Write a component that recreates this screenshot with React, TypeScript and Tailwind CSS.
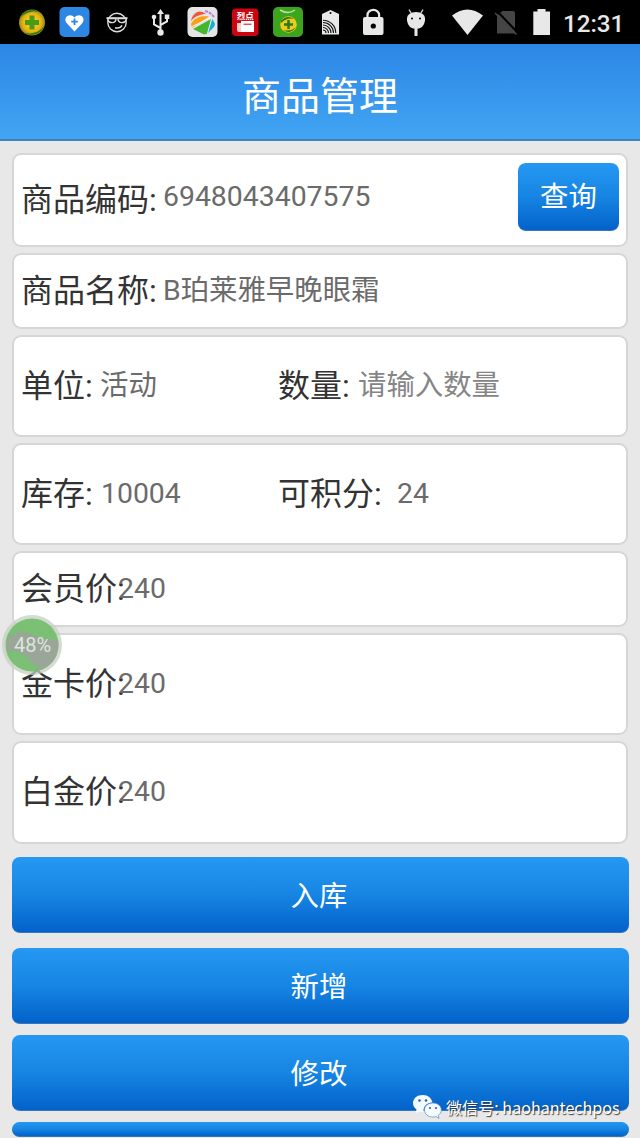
import type { ReactNode } from "react";

function StatusBar() {
    return (
        <div className="flex h-[44px] w-full shrink-0 bg-black">
            <svg width="560" height="44" viewBox="0 0 560 44" fill="#e8e8e8">
                <defs>
                    <radialGradient id="gold">
                        <stop offset="0" stopColor="#ffdf20" />
                        <stop offset="0.7" stopColor="#e9b414" />
                        <stop offset="1" stopColor="#9a8a16" />
                    </radialGradient>
                    <clipPath id="ball">
                        <circle cx="203" cy="22.5" r="12" />
                    </clipPath>
                    <clipPath id="tag">
                        <rect x="323" y="19" width="14" height="14" />
                    </clipPath>
                </defs>
                <circle cx="32" cy="22.5" r="13" fill="url(#gold)" />
                <path d="M20 18A13 13 0 0 1 40 12.500C33 10 25 13 20 18ZM44 26A13 13 0 0 1 24 32.500C32 35 40 32 44 26Z" fill="#347c16" />
                <path d="M29.500 15.500h5v4.500h4.500v5h-4.500v4.500h-5V25H25v-5h4.500Z" fill="#4b9b18" />
                <rect x="59.500" y="7" width="30" height="30" rx="5" fill="#2d86e2" />
                <path d="M74.500 31.500 67 23.500C62 17 70 12 74.500 17.500C79 12 87 17 82 23.500Z" fill="#fff" />
                <path d="M74.500 18.500v6.500M71.300 21.700h6.500" stroke="#2d86e2" strokeWidth="1.800" />
                <g fill="none" stroke="#ddd" strokeWidth="1.400">
                    <circle cx="117" cy="22.500" r="9.200" />
                    <path d="M106.500 18h21M115 27.800c3.500.7 6-.2 7-2.500" />
                    <path d="M107.500 18.500h8.500c0 5.500-7.500 5.500-8.500 0ZM118 18.500h8.500c-1 5.500-8.500 5.500-8.500 0Z" fill="#000" />
                </g>
                <path d="M160.500 32V13M160.500 28l-6.500-3.500V17M160.500 25l6.500-3.500V16" stroke="#e8e8e8" fill="none" strokeWidth="2" />
                <circle cx="160.500" cy="32.500" r="3.200" />
                <path d="m160.500 9 3.500 5h-7Z" />
                <circle cx="154" cy="17" r="2.300" />
                <rect x="164.800" y="14.500" width="4.500" height="4.500" />
                <rect x="187.500" y="7" width="30" height="30" rx="5" fill="#e5e5e7" />
                <g clipPath="url(#ball)">
                    <path d="M191 16C194 11 201 10 206 14C201 14 195 16 191 21Z" fill="#f35438" />
                    <path d="M190 26C193 18 200 15 209 16.500L192 28Z" fill="#ff9f13" />
                    <path d="M193 29 211 19 207 36Z" fill="#46b72c" />
                    <path d="M207 34 211.500 18 216 25Z" fill="#19acd9" />
                    <path d="M191 27 211 17.500M207 35 212 18" stroke="#f4f4f4" strokeWidth="1" />
                </g>
                <path d="M205 11q6 1.500 9 6" stroke="#b780d4" strokeWidth="2" strokeDasharray="3 1" fill="none" />
                <rect x="232" y="8.500" width="26.500" height="27.500" rx="4" fill="#ca0711" />
                <rect x="241" y="21" width="13" height="11" fill="#fff" />
                <path d="M237 23h4v9h-2q-2 0-2-2Z" fill="#f7cece" />
                <path d="M243.500 24.200h8" stroke="#ca0711" strokeWidth="1" />
                <text x="245.300" y="19.200" textAnchor="middle" fontSize="8.500" fontWeight="700" fill="#fff" style={{ fontFamily: '"Noto Sans CJK SC", sans-serif' }}>
                    烈点
                </text>
                <rect x="273" y="7" width="30" height="30" rx="5" fill="#3ba51d" />
                <path d="M280 10q8 5 15 0" stroke="#b9e59a" strokeWidth="1.500" fill="none" />
                <circle cx="288.500" cy="24.500" r="8.300" fill="#f1c91b" />
                <path d="M281 21q6-7 13-2-7-2-13 4ZM296 27q-5 8-13 3 8 2 13-3Z" fill="#267513" />
                <path d="M288.500 20v9M284 24.500h9" stroke="#247c16" strokeWidth="2.500" />
                <path d="M322 14 330.500 10 339 14v20.500h-17Z" />
                <circle cx="330.500" cy="13" r="1" fill="#000" />
                <g clipPath="url(#tag)" fill="none" stroke="#111" strokeWidth="1.100">
                    <circle cx="323" cy="33" r="3" />
                    <circle cx="323" cy="33" r="5.500" />
                    <circle cx="323" cy="33" r="8" />
                    <circle cx="323" cy="33" r="10.500" />
                    <circle cx="323" cy="33" r="12.800" />
                </g>
                <rect x="363" y="17" width="20.500" height="18" rx="2" />
                <path d="M367.500 18v-3a5.800 5.200 0 0 1 11.600 0V18" fill="none" stroke="#e8e8e8" strokeWidth="2.200" />
                <circle cx="373.300" cy="26" r="2.600" fill="#000" />
                <path d="M407 18a9 6 0 0 1 18 0v2.500q-1 8-9 8.500-8-.5-9-8.500Z" />
                <path d="m409 9.500 3 5M423 9.500l-3 5" stroke="#e8e8e8" strokeWidth="1.200" />
                <rect x="414.500" y="28" width="3" height="8" />
                <circle cx="412" cy="18.500" r="1" fill="#000" />
                <circle cx="420" cy="18.500" r="1" fill="#000" />
                <path d="M452 15.500q15.500-12 31 0L467.500 35Z" />
                <path d="M498 14.500 502.500 11H513q2 0 2 2v20.500h-18V15Z" fill="#454545" />
                <path d="m497 11 21 22" stroke="#000" strokeWidth="2" />
                <path d="m495 13 21.500 21.500" stroke="#454545" strokeWidth="1.700" />
                <path d="M533.300 11.500h4.200V9h8v2.500h4.500V35h-16.700Z" />
            </svg>
            <span className="ml-[3px] mt-[7px] text-[24.200px] font-medium leading-[34px] text-[#e8e8e8]">12:31</span>
        </div>
    );
}

function Label({ children, className = "" }: { children: ReactNode; className?: string }) {
    return <span className={`shrink-0 whitespace-nowrap text-[32px] leading-[40px] text-[#333] ${className}`}>{children}</span>;
}

function Value({ children, className = "" }: { children: ReactNode; className?: string }) {
    return <span className={`relative whitespace-nowrap text-[28.400px] leading-[40px] text-[#6b6b6b] ${className}`}>{children}</span>;
}

function Row({ children, className = "" }: { children: ReactNode; className: string }) {
    return <div className={`flex w-full shrink-0 items-center rounded-[9px] border-2 border-[#d6d6d6] bg-white pl-[7px] ${className}`}>{children}</div>;
}

function Button({ children, className = "" }: { children?: ReactNode; className?: string }) {
    return (
        <button className={`flex shrink-0 items-center justify-center rounded-[8px] border-b border-[#3976b4] bg-linear-to-b from-[#2598f3] via-[#1785e3] to-[#0462ca] text-[28.400px] leading-none text-white ${className}`}>
            {children}
        </button>
    );
}

function ProgressBall() {
    return (
        <div className="absolute left-[2px] top-[615px] size-[60px]">
            <svg width="60" height="60" viewBox="0 0 60 60">
                <circle cx="30" cy="30" r="30" fill="#c3d0c0" fillOpacity=".75" />
                <circle cx="30" cy="30" r="26.500" fill="#72bd6a" fillOpacity=".9" />
                <path d="M8 21Q18 14 28 19T56 25A26.500 26.500 0 0 1 39 55Q31 49 26 43T5 35Q3 27 8 21Z" fill="#9da39c" fillOpacity=".9" />
            </svg>
            <span className="absolute inset-0 flex items-center justify-center pl-px text-[20px] leading-none text-[#dfe5de]">48%</span>
        </div>
    );
}

export default function App() {
    return (
        <div className="relative flex h-[1138px] w-[640px] flex-col overflow-hidden bg-[#e8e8e8] font-[Roboto,'Noto_Sans_CJK_SC',sans-serif]">
            <StatusBar />
            <header className="flex h-[97px] shrink-0 items-center justify-center border-b-2 border-[#4280b9] bg-linear-to-b from-[#2c86e6] to-[#42a5f2] pt-[12px] text-[39px] leading-none text-white">
                <h1>商品管理</h1>
            </header>
            <main className="flex flex-col pl-[12px] pr-[11px] pt-[12px]">
                <div className="flex flex-col gap-[6px] pr-px">
                    <Row className="h-[94px] justify-between pr-[7px]">
                        <div className="flex">
                            <Label className="w-[142px]">商品编码:</Label>
                            <Value className="-mt-[3px]">6948043407575</Value>
                        </div>
                        <Button className="-mt-[7px] h-[68px] w-[101px] pt-[5px]">查询</Button>
                    </Row>
                    <Row className="h-[76px]">
                        <Label className="w-[142px]">商品名称:</Label>
                        <Value>B珀莱雅早晚眼霜</Value>
                    </Row>
                    <Row className="h-[102px]">
                        <Label className="w-[79px]">单位:</Label>
                        <Value className="w-[178px]">活动</Value>
                        <Label className="w-[80px]">数量:</Label>
                        <Value className="text-[#858585]">请输入数量</Value>
                    </Row>
                    <Row className="h-[102px]">
                        <Label className="w-[80px]">库存:</Label>
                        <Value className="w-[177px]">10004</Value>
                        <Label className="w-[119px]">可积分:</Label>
                        <Value>24</Value>
                    </Row>
                    <Row className="h-[76px]">
                        <Label className="w-[97px]">会员价:</Label>
                        <Value>240</Value>
                    </Row>
                    <Row className="h-[102px]">
                        <Label className="w-[97px]">金卡价:</Label>
                        <Value>240</Value>
                    </Row>
                    <Row className="h-[103px] pb-px">
                        <Label className="w-[97px]">白金价:</Label>
                        <Value>240</Value>
                    </Row>
                </div>
                <Button className="mt-[13px] h-[76px] pr-[3px] pt-[5px]">入库</Button>
                <Button className="mt-[15px] h-[76px] pr-[3px] pt-[5px]">新增</Button>
                <Button className="mt-[11px] h-[76px] pr-[3px] pt-[5px]">修改</Button>
                <Button className="mt-[11px] h-[15px] rounded-[4px]" />
            </main>
            <ProgressBall />
            <div className="absolute left-[413px] top-[1094px] flex items-center">
                <svg width="29" height="26" viewBox="0 0 29 26" fill="#f5faff">
                    <path d="M10 1C4 1 0 4.500 0 9.200c0 2.600 1.400 4.700 3.500 6L2.500 19.500l4-2q2 .6 4 .5C10 12.500 14 8.500 19.500 8.500 18.500 4 15 1 10 1Z" />
                    <path d="M20 9c-5.200 0-8.500 3-8.500 7s3.500 7 8.500 7q1.500 0 3-.5l3 2-.7-3.200c1.800-1.200 3-3.100 3-5.300 0-4-3.500-7-8.300-7Z" stroke="#5c8ec4" strokeWidth=".7" />
                    <g fill="#2266b0">
                        <circle cx="6.500" cy="6.500" r="1.300" />
                        <circle cx="13" cy="6.500" r="1.300" />
                        <circle cx="17" cy="14" r="1.100" />
                        <circle cx="23" cy="14" r="1.100" />
                    </g>
                </svg>
                <span className="ml-[4px] whitespace-nowrap font-['Noto_Sans_CJK_SC',sans-serif] text-[16.100px] leading-[26px] text-white [text-shadow:1px_1px_1px_#333]">微信号: haohantechpos</span>
            </div>
        </div>
    );
}
